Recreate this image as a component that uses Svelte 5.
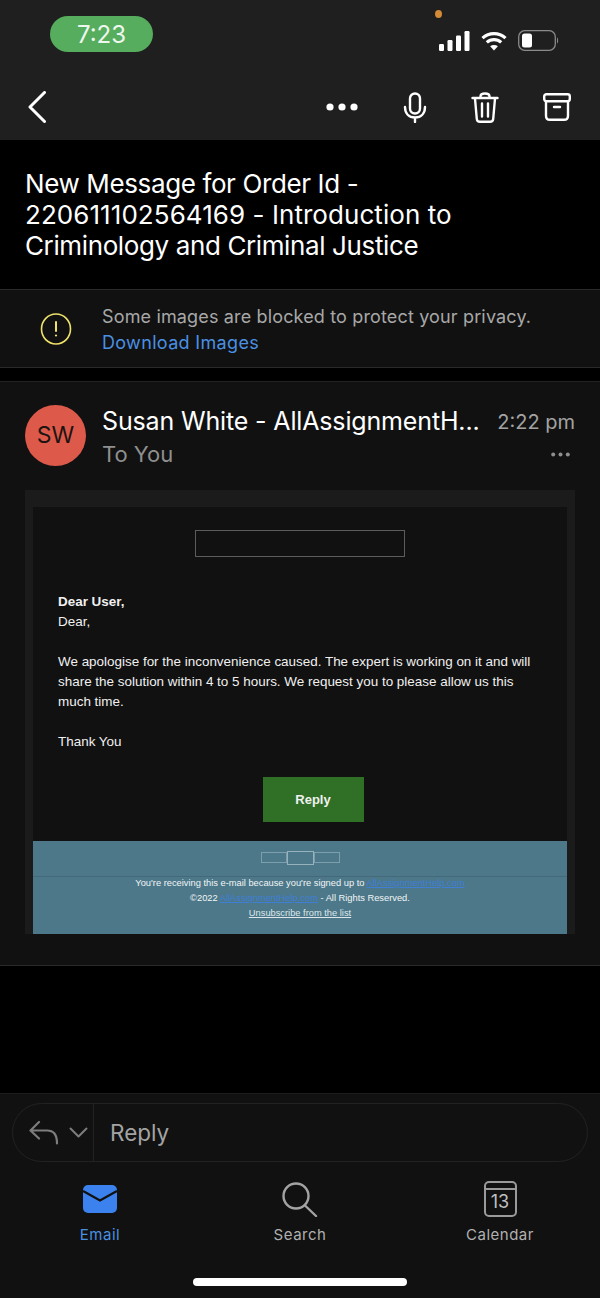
<script>
  const tabs = [
    { id: "email", label: "Email" },
    { id: "search", label: "Search" },
    { id: "calendar", label: "Calendar" }
  ];
</script>

<div class="screen">
  <header class="top">
    <div class="status">
      <div class="time">7:23</div>
      <span class="dot"></span>
      <div class="status-icons">
        <svg width="31" height="20" viewBox="0 0 31 20" fill="#fff">
          <rect x="0" y="13" width="5" height="7" rx="1.2" />
          <rect x="8.500" y="9" width="5" height="11" rx="1.2" />
          <rect x="17" y="4.500" width="5" height="15.500" rx="1.2" />
          <rect x="25.500" y="0" width="5" height="20" rx="1.2" />
        </svg>
        <svg width="26" height="20" viewBox="0 0 26 20" fill="none" stroke="#fff" stroke-width="3.2">
          <path d="M1.500 7.200C8 1 18 1 24.500 7.200" />
          <path d="M5.800 11.400C10 7.600 16 7.600 20.200 11.400" />
          <path d="M13 19.500l-3.900-4.300c2.200-1.700 5.600-1.700 7.800 0z" fill="#fff" stroke="none" />
        </svg>
        <svg width="41" height="21" viewBox="0 0 41 21" fill="none">
          <rect x="0.700" y="0.700" width="36.600" height="19.600" rx="6" stroke="#8a8a8a" stroke-width="1.300" />
          <rect x="4" y="3.500" width="10" height="14" rx="2.500" fill="#fff" />
          <path d="M39 7.500c1.500.5 1.500 5.500 0 6z" fill="#8a8a8a" />
        </svg>
      </div>
    </div>
    <div class="toolbar">
      <svg class="back" width="19" height="32" viewBox="0 0 19 32" fill="none" stroke="#fff" stroke-width="3" stroke-linecap="round" stroke-linejoin="round">
        <path d="M17.500 1.500L3 16l14.500 14.500" />
      </svg>
      <div class="actions">
        <svg class="dots" width="32" height="8" viewBox="0 0 32 8" fill="#fff">
          <circle cx="4" cy="4" r="3.600" /><circle cx="16" cy="4" r="3.600" /><circle cx="28" cy="4" r="3.600" />
        </svg>
        <svg width="24" height="31" viewBox="0 0 24 31" fill="none" stroke="#fff" stroke-width="2.400" stroke-linecap="round">
          <rect x="7" y="1.500" width="10" height="20" rx="5" />
          <path d="M2 15c0 6.500 4 10.500 10 10.500S22 21.500 22 15M12 25.500V30" />
        </svg>
        <svg width="28" height="31" viewBox="0 0 28 31" fill="none" stroke="#fff" stroke-width="2.400" stroke-linecap="round" stroke-linejoin="round">
          <path d="M1.500 6h25M9.500 5.500V4.500c0-4 9-4 9 0V5.500M4 6.500l1.800 20.500c.2 2 1.300 2.800 3.200 2.800h10c1.900 0 3-.8 3.200-2.800L24 6.500M11 11.500v13M17 11.500v13" />
        </svg>
        <svg width="28" height="28" viewBox="0 0 28 28" fill="none" stroke="#fff" stroke-width="2.400" stroke-linecap="round" stroke-linejoin="round">
          <rect x="1.200" y="1.200" width="25.600" height="7" rx="2.200" />
          <path d="M3 8.200v14.500c0 3 1.500 4.100 4 4.100h14c2.500 0 4-1.100 4-4.100V8.200M11 14h6" />
        </svg>
      </div>
    </div>
  </header>

  <section class="subject">
    <h1>
      <span class="line">New Message for Order Id -</span>
      <span class="line id-line">220611102564169 - Introduction to</span>
      <span class="line">Criminology and Criminal Justice</span>
    </h1>
  </section>

  <section class="blocked">
    <svg width="32" height="32" viewBox="0 0 32 32" fill="none" stroke="#efe26a" stroke-width="1.600" stroke-linecap="round">
      <ellipse cx="16" cy="16" rx="14.500" ry="15" />
      <path d="M16 9v9" stroke-width="2" />
      <circle cx="16" cy="22.500" r="1.100" fill="#efe26a" stroke="none" />
    </svg>
    <div class="blocked-text">
      <p>Some images are blocked to protect your privacy.</p>
      <p class="link">Download Images</p>
    </div>
  </section>

  <section class="message">
    <div class="sender">
      <div class="avatar">SW</div>
      <div class="sender-text">
        <div class="row">
          <span class="name">Susan White - AllAssignmentH...</span>
          <span class="when">2:22 pm</span>
        </div>
        <div class="row">
          <span class="to">To You</span>
          <svg class="more" width="19" height="5" viewBox="0 0 19 5" fill="#8f8f8f">
            <circle cx="2.200" cy="2.500" r="2" /><circle cx="9.500" cy="2.500" r="2" /><circle cx="16.800" cy="2.500" r="2" />
          </svg>
        </div>
      </div>
    </div>

    <div class="mail-frame">
      <div class="mail-body">
        <div class="logo-box"></div>
        <p class="dear"><b>Dear User,</b><br />Dear,</p>
        <p>We apologise for the inconvenience caused. The expert is working on it and will share the solution within 4 to 5 hours. We request you to please allow us this much time.</p>
        <p>Thank You</p>
        <div class="reply-wrap"><span class="reply-btn">Reply</span></div>
      </div>
      <div class="mail-foot">
        <div class="foot-icons"><span></span><span class="mid"></span><span></span></div>
        <div class="foot-text">
          <div>You're receiving this e-mail because you're signed up to <u class="blue">AllAssignmentHelp.com</u></div>
          <div>©2022 <u class="blue">AllAssignmentHelp.com</u> - All Rights Reserved.</div>
          <div><u class="unsub">Unsubscribe from the list</u></div>
        </div>
      </div>
    </div>
  </section>

  <div class="spacer"></div>

  <footer class="bottom">
    <div class="reply-bar">
      <div class="reply-icons">
        <svg width="30" height="25" viewBox="0 0 30 25" fill="none" stroke="#7d7d7d" stroke-width="2.200" stroke-linecap="round" stroke-linejoin="round">
          <path d="M10 2L1.500 10.500l8.500 8M1.500 10.500H18c6.500 0 10 3.500 10 13" />
        </svg>
        <svg width="19" height="11" viewBox="0 0 19 11" fill="none" stroke="#7d7d7d" stroke-width="2" stroke-linecap="round" stroke-linejoin="round">
          <path d="M1.500 1.500l8 8 8-8" />
        </svg>
      </div>
      <span class="reply-label">Reply</span>
    </div>
    <nav class="tabs">
      {#each tabs as tab}
        <div class="tab" class:active={tab.id === "email"}>
          <div class="tab-icon">
            {#if tab.id === "email"}
              <svg width="34" height="28" viewBox="0 0 34 28">
                <rect x="0" y="0" width="34" height="28" rx="5" fill="#3b82ee" />
                <path d="M0 6L17 15.500 34 6" fill="none" stroke="#111" stroke-width="2.400" />
              </svg>
            {:else if tab.id === "search"}
              <svg width="36" height="35" viewBox="0 0 36 35" fill="none" stroke="#a3a3a3" stroke-width="2.400" stroke-linecap="round">
                <circle cx="14" cy="14" r="12.500" />
                <path d="M23 23.500l11 10.500" />
              </svg>
            {:else}
              <div class="cal">
                <span class="cal-head"></span>
                <span class="cal-day">13</span>
              </div>
            {/if}
          </div>
          <span class="tab-label">{tab.label}</span>
        </div>
      {/each}
    </nav>
    <div class="home-bar"></div>
  </footer>
</div>

<style>
  :global(body) {
    margin: 0;
    background: #000;
  }

  .screen {
    width: 600px;
    height: 1298px;
    display: flex;
    flex-direction: column;
    overflow: hidden;
    background: #000;
    font-family: Inter, "Liberation Sans", sans-serif;
    color: #fff;
  }

  .top {
    height: 140px;
    box-sizing: border-box;
    background: #1f1f1f;
    padding: 16px 29px 0 27px;
  }

  .status {
    position: relative;
    display: flex;
    justify-content: space-between;
    height: 50px;
    padding-left: 23px;
  }

  .time {
    width: 103px;
    height: 36px;
    border-radius: 18px;
    background: #56ad5e;
    text-align: center;
    font-size: 24px;
    line-height: 37px;
    color: #eef7ee;
  }

  .dot {
    position: absolute;
    left: 408px;
    top: -6px;
    width: 7px;
    height: 8px;
    border-radius: 50%;
    background: #d48a36;
  }

  .status-icons {
    display: flex;
    align-items: center;
    gap: 11px;
    height: 21px;
    margin-top: 14px;
    margin-right: 12px;
  }

  .toolbar {
    display: flex;
    justify-content: space-between;
    align-items: center;
    height: 46px;
    margin-top: 18px;
  }

  .actions {
    display: flex;
    align-items: center;
    gap: 44px;
  }

  .dots {
    margin-right: 1px;
  }

  .subject {
    height: 149px;
    box-sizing: border-box;
    padding: 28px 25px 0;
    background: #000;
  }

  h1 {
    margin: 0;
    font-size: 26px;
    font-weight: 400;
    line-height: 31px;
    letter-spacing: -0.38px;
  }

  .line {
    display: block;
  }

  .id-line {
    letter-spacing: 0.06px;
  }

  .blocked {
    height: 79px;
    box-sizing: border-box;
    display: flex;
    align-items: center;
    padding: 0 0 0 40px;
    gap: 30px;
    background: #111;
    border-top: 1px solid #2a2a2a;
    border-bottom: 1px solid #2a2a2a;
  }

  .blocked-text {
    padding-top: 2px;
  }

  .blocked-text p {
    margin: 0;
    font-size: 18px;
    line-height: 26px;
    letter-spacing: 0.15px;
    color: #a8a8a8;
  }

  .blocked-text .link {
    color: #4a90e2;
    letter-spacing: 0.33px;
  }

  .message {
    margin-top: 13px;
    height: 585px;
    box-sizing: border-box;
    background: #111;
    border-top: 1px solid #222;
    border-bottom: 1px solid #2a2a2a;
    padding: 0 25px;
  }

  .sender {
    display: flex;
    gap: 16px;
    padding-top: 23px;
    height: 85px;
  }

  .avatar {
    width: 61px;
    height: 61px;
    flex: none;
    border-radius: 50%;
    background: #dd5a4b;
    color: #1d1412;
    font-size: 23px;
    line-height: 61px;
    text-align: center;
  }

  .sender-text {
    flex: 1;
  }

  .row {
    display: flex;
    justify-content: space-between;
    align-items: center;
  }

  .name {
    font-size: 25px;
    line-height: 33px;
    letter-spacing: -0.15px;
  }

  .when {
    font-size: 20px;
    color: #a3a3a3;
  }

  .to {
    font-size: 22px;
    line-height: 33px;
    color: #8f8f8f;
  }

  .more {
    margin-right: 5px;
  }

  .mail-frame {
    background: #1b1b1b;
    padding: 17px 8px 0;
    height: 444px;
    box-sizing: border-box;
    font-family: "Liberation Sans", Arial, sans-serif;
  }

  .mail-body {
    background: #111;
    height: 334px;
    box-sizing: border-box;
    padding: 23px 25px 0;
    font-size: 13.450px;
    line-height: 20px;
    color: #f0f0f0;
  }

  .mail-body p {
    margin: 0 0 20px;
  }

  .logo-box {
    width: 208px;
    height: 25px;
    margin: 0 auto 35px;
    border: 1px solid #5c5c5c;
  }

  .reply-wrap {
    display: flex;
    justify-content: center;
    padding-left: 26px;
    margin-top: 25px;
  }

  .reply-btn {
    width: 101px;
    height: 45px;
    background: #2f7026;
    line-height: 45px;
    text-align: center;
    font-weight: 700;
    font-size: 13px;
  }

  .mail-foot {
    height: 93px;
    background: #4c7889;
    text-align: center;
    font-size: 9.300px;
    line-height: 15px;
    color: #f2f5f6;
  }

  .foot-icons {
    display: flex;
    justify-content: center;
    align-items: center;
    height: 36px;
    margin-bottom: -1px;
    box-sizing: border-box;
    border-bottom: 1px solid #43697a;
    padding-bottom: 2px;
  }

  .foot-icons span {
    width: 26px;
    height: 11px;
    box-sizing: border-box;
    border: 1px solid #7d9eab;
  }

  .foot-icons .mid {
    width: 27px;
    height: 14px;
    border-color: #96b2bd;
  }

  .blue {
    color: #3f7fd6;
  }

  .unsub {
    color: #dfe7ea;
  }

  .spacer {
    flex: 1;
  }

  .bottom {
    height: 205px;
    flex: none;
    box-sizing: border-box;
    background: #111;
    border-top: 1px solid #1c1c1c;
    padding-top: 9px;
    position: relative;
  }

  .reply-bar {
    height: 59px;
    margin: 0 12px;
    box-sizing: border-box;
    border: 1px solid #222;
    border-radius: 30px;
    display: flex;
    align-items: center;
  }

  .reply-icons {
    width: 81px;
    height: 100%;
    box-sizing: border-box;
    border-right: 1px solid #222;
    display: flex;
    align-items: center;
    gap: 10px;
    padding-left: 16px;
  }

  .reply-label {
    margin-left: 16px;
    font-size: 22.500px;
    color: #a3a3a3;
  }

  .tabs {
    display: grid;
    grid-template-columns: repeat(3, 200px);
    margin-top: 19px;
  }

  .tab {
    display: flex;
    flex-direction: column;
    align-items: center;
    color: #b0b0b0;
  }

  .tab.active {
    color: #4a90e2;
  }

  .tab-icon {
    height: 36px;
    display: flex;
    align-items: center;
  }

  .tab-label {
    margin-top: 8px;
    font-size: 15px;
    line-height: 20px;
    letter-spacing: 0.5px;
  }

  .cal {
    width: 33px;
    height: 36px;
    box-sizing: border-box;
    border: 2px solid #9a9a9a;
    border-radius: 5px;
    text-align: center;
  }

  .cal-head {
    display: block;
    height: 5px;
    border-bottom: 2px solid #9a9a9a;
  }

  .cal-day {
    display: block;
    font-size: 18px;
    line-height: 24px;
    color: #c0c0c0;
  }

  .home-bar {
    position: absolute;
    left: 193px;
    bottom: 12px;
    width: 214px;
    height: 8px;
    border-radius: 4px;
    background: #fff;
  }
</style>
